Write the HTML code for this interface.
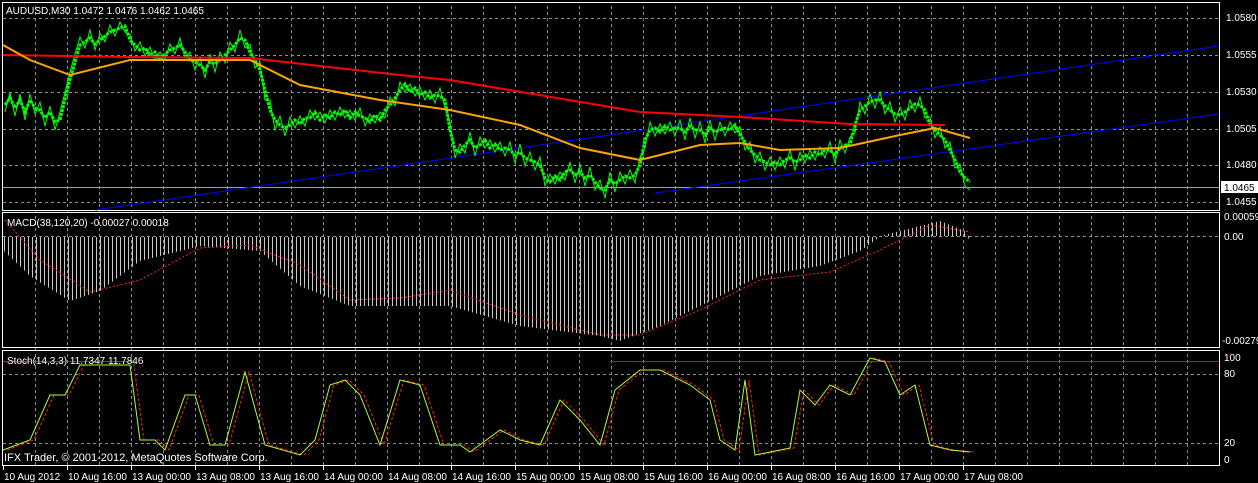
<!DOCTYPE html><html><head><meta charset="utf-8"><style>
body{margin:0;background:#000;width:1258px;height:483px;overflow:hidden}
svg{display:block}
text{font-family:"Liberation Sans",sans-serif;font-size:10px;fill:#fff}
</style></head><body>
<svg width="1258" height="483" xmlns="http://www.w3.org/2000/svg">
<defs>
<pattern id="vg" x="35" y="0" width="32" height="6" patternUnits="userSpaceOnUse"><rect x="0" y="0" width="1" height="3" fill="#8a9099"/></pattern>
<pattern id="hist" x="0" y="0" width="4" height="10" patternUnits="userSpaceOnUse"><rect x="0" y="0" width="1" height="10" fill="#c8c8c8"/></pattern>
</defs>
<rect x="35" y="3" width="1156" height="463" fill="url(#vg)"/>
<g stroke="#8a9099" stroke-dasharray="3,3">
<line x1="3" y1="18.5" x2="1219" y2="18.5"/><line x1="3" y1="55.5" x2="1219" y2="55.5"/><line x1="3" y1="92.5" x2="1219" y2="92.5"/><line x1="3" y1="129.5" x2="1219" y2="129.5"/><line x1="3" y1="165.5" x2="1219" y2="165.5"/><line x1="3" y1="202.5" x2="1219" y2="202.5"/><line x1="3" y1="236.5" x2="1219" y2="236.5"/><line x1="3" y1="374.5" x2="1219" y2="374.5"/><line x1="3" y1="443.5" x2="1219" y2="443.5"/>
</g>
<g fill="none" stroke="#fff">
<rect x="2.5" y="2.5" width="1217" height="208"/><rect x="2.5" y="212.5" width="1217" height="135"/><rect x="2.5" y="350.5" width="1217" height="115"/>
</g>
<line x1="3" y1="187.5" x2="1219" y2="187.5" stroke="#9aa0a8"/>
<line x1="95" y1="210" x2="1219" y2="46" stroke="#0000ff"/>
<line x1="655" y1="193" x2="1219" y2="114" stroke="#0000ff"/>
<polyline fill="none" stroke="#00ff00" stroke-width="1" points="5,112 10,92 15,116 20,94 25,120 30,94 35,114 40,102 45,126 50,106 55,130 60,112 65,92 70,72 75,54 80,37 85,48 90,30 95,50 100,33 105,42 110,25 115,36 120,22 125,32 130,34 135,51 140,42 145,56 150,47 155,60 160,52 165,60 170,44 175,54 180,38 185,58 190,52 195,70 200,57 205,78 210,54 215,72 220,52 225,63 230,42 235,52 240,30 245,48 250,44 255,68 260,62 265,100 270,100 275,130 280,116 285,136 290,117 295,128 300,116 305,126 310,110 315,120 320,112 325,123 330,110 335,120 340,107 345,118 350,110 355,120 360,108 365,126 370,114 375,123 380,112 385,118 390,97 395,106 400,82 405,92 410,84 415,96 420,87 425,100 430,90 435,103 440,88 445,108 450,122 455,158 460,144 465,153 470,132 475,156 480,137 485,148 490,140 495,152 500,142 505,156 510,142 515,163 520,144 525,166 530,152 535,170 540,157 545,186 550,174 555,184 560,172 565,180 570,162 575,183 580,164 585,186 590,167 595,190 600,180 605,198 610,172 615,192 620,172 625,184 630,170 635,183 640,157 645,148 650,122 655,136 660,124 665,134 670,122 675,136 680,120 685,140 690,118 695,138 700,122 705,143 710,120 715,140 720,122 725,136 730,122 735,133 740,127 745,150 750,142 755,163 760,152 765,170 770,157 775,170 780,157 785,168 790,150 795,170 800,152 805,163 810,150 815,160 820,147 825,158 830,142 835,163 840,140 845,153 850,137 855,133 860,102 865,114 870,94 875,108 880,92 885,114 890,102 895,122 900,107 905,120 910,100 915,112 920,97 925,118 930,117 935,138 940,127 945,148 950,142 955,168 960,164 965,186 970,190"/>
<polyline fill="none" stroke="#00ff00" stroke-width="3" stroke-dasharray="3,1" points="5,105 10,98 15,108 20,100 25,112 30,100 35,108 40,110 45,118 50,112 55,122 60,120 65,100 70,80 75,62 80,45 85,42 90,38 95,44 100,40 105,36 110,32 115,30 120,28 125,26 130,40 135,45 140,50 145,48 150,55 155,52 160,60 165,54 170,50 175,48 180,45 185,52 190,60 195,62 200,65 205,70 210,62 215,64 220,60 225,55 230,50 235,45 240,38 245,40 250,52 255,60 260,70 265,90 270,110 275,120 280,125 285,128 290,125 295,120 300,124 305,118 310,118 315,112 320,120 325,115 330,118 335,112 340,115 345,110 350,118 355,112 360,116 365,118 370,122 375,115 380,120 385,110 390,105 395,98 400,90 405,84 410,92 415,88 420,95 425,92 430,98 435,95 440,96 445,100 450,130 455,150 460,152 465,145 470,140 475,148 480,145 485,140 490,148 495,144 500,150 505,148 510,150 515,155 520,152 525,158 530,160 535,162 540,165 545,178 550,182 555,176 560,180 565,172 570,170 575,175 580,172 585,178 590,175 595,182 600,188 605,190 610,180 615,184 620,180 625,176 630,178 635,175 640,165 645,140 650,130 655,128 660,132 665,126 670,130 675,128 680,128 685,132 690,126 695,130 700,130 705,135 710,128 715,132 720,130 725,128 730,130 735,125 740,135 745,142 750,150 755,155 760,160 765,162 770,165 775,162 780,165 785,160 790,158 795,162 800,160 805,155 810,158 815,152 820,155 825,150 830,150 835,155 840,148 845,145 850,145 855,125 860,110 865,106 870,102 875,100 880,100 885,106 890,110 895,114 900,115 905,112 910,108 915,104 920,105 925,110 930,125 935,130 940,135 945,140 950,150 955,160 960,172 965,178 970,182"/>
<polyline fill="none" stroke="#ff0000" stroke-width="2" points="3,55 130,57 250,58 400,75 450,80 640,112 740,117 850,124 945,125"/>
<polyline fill="none" stroke="#ffa500" stroke-width="2" points="3,45 30,60 70,75 130,60 250,60 300,85 380,100 450,110 520,125 580,148 640,160 700,145 740,143 780,150 840,148 900,135 935,128 970,138"/>
<polygon fill="url(#hist)" points="4,237 4,251 30,276 70,301 100,291 140,261 200,246 260,251 300,286 350,306 450,306 520,326 600,336 620,341 660,326 700,306 760,276 820,266 860,251 880,237"/>
<polygon fill="url(#hist)" points="880,236 900,231 940,221 965,231 972,246 972,236"/>
<polyline fill="none" stroke="#ff2020" stroke-dasharray="2,2" points="5,220 40,260 90,292 140,280 200,248 250,245 300,265 350,300 400,298 450,290 520,315 600,335 640,335 700,310 760,280 830,272 880,250 930,225 970,232"/>
<line x1="3" y1="361.5" x2="135" y2="361.5" stroke="#ff0000"/><line x1="610" y1="361.5" x2="1219" y2="361.5" stroke="#ff0000"/>
<polyline fill="none" stroke="#ff2020" stroke-dasharray="3,2" points="7,450 34,440 54,395 69,395 84,365 134,365 144,440 159,440 169,450 189,395 199,395 214,445 229,445 249,372 269,445 304,455 319,440 334,385 349,380 364,395 384,445 404,380 424,385 444,445 464,445 474,452 504,430 524,440 544,445 564,400 584,420 604,445 619,390 644,370 664,370 694,385 714,400 724,440 739,450 749,380 759,455 794,448 804,390 819,405 834,385 854,395 874,358 889,362 904,395 919,385 934,445 954,450 974,452"/>
<polyline fill="none" stroke="#adff2f" points="3,450 30,440 50,395 65,395 80,365 120,365 130,365 140,440 155,440 165,450 185,395 195,395 210,445 225,445 245,372 265,445 300,455 315,440 330,385 345,380 360,395 380,445 400,380 420,385 440,445 460,445 470,452 500,430 520,440 540,445 560,400 580,420 600,445 615,390 640,370 660,370 690,385 710,400 720,440 735,450 745,380 755,455 790,448 800,390 815,405 830,385 850,395 870,358 885,362 900,395 915,385 930,445 950,450 970,452"/>
<text x="6" y="14">AUDUSD,M30  1.0472 1.0476 1.0462 1.0465</text>
<text x="7" y="226">MACD(38,120,20) -0.00027 0.00018</text>
<text x="7" y="364">Stoch(14,3,3) 11.7347 11.7846</text>
<text x="4" y="461" style="font-size:11px">IFX Trader, © 2001-2012, MetaQuotes Software Corp.</text>
<text x="1226" y="21">1.0580</text><text x="1226" y="58">1.0555</text><text x="1226" y="95">1.0530</text><text x="1226" y="132">1.0505</text><text x="1226" y="168">1.0480</text><text x="1226" y="205">1.0455</text>
<text x="1224" y="220">0.00059</text><text x="1224" y="240">0.00</text><text x="1222" y="344">-0.00279</text>
<text x="1224" y="361">100</text><text x="1224" y="377">80</text><text x="1224" y="446">20</text><text x="1224" y="463">0</text>
<rect x="1221" y="181" width="37" height="12" fill="#fff"/><text x="1224" y="191" style="fill:#000">1.0465</text>
<g stroke="#fff"><line x1="3.5" y1="466" x2="3.5" y2="470"/><line x1="67.5" y1="466" x2="67.5" y2="470"/><line x1="131.5" y1="466" x2="131.5" y2="470"/><line x1="195.5" y1="466" x2="195.5" y2="470"/><line x1="259.5" y1="466" x2="259.5" y2="470"/><line x1="323.5" y1="466" x2="323.5" y2="470"/><line x1="387.5" y1="466" x2="387.5" y2="470"/><line x1="451.5" y1="466" x2="451.5" y2="470"/><line x1="515.5" y1="466" x2="515.5" y2="470"/><line x1="579.5" y1="466" x2="579.5" y2="470"/><line x1="643.5" y1="466" x2="643.5" y2="470"/><line x1="707.5" y1="466" x2="707.5" y2="470"/><line x1="771.5" y1="466" x2="771.5" y2="470"/><line x1="835.5" y1="466" x2="835.5" y2="470"/><line x1="899.5" y1="466" x2="899.5" y2="470"/><line x1="963.5" y1="466" x2="963.5" y2="470"/></g>
<text x="4" y="480">10 Aug 2012</text><text x="68" y="480">10 Aug 16:00</text><text x="132" y="480">13 Aug 00:00</text><text x="196" y="480">13 Aug 08:00</text><text x="260" y="480">13 Aug 16:00</text><text x="324" y="480">14 Aug 00:00</text><text x="388" y="480">14 Aug 08:00</text><text x="452" y="480">14 Aug 16:00</text><text x="516" y="480">15 Aug 00:00</text><text x="580" y="480">15 Aug 08:00</text><text x="644" y="480">15 Aug 16:00</text><text x="708" y="480">16 Aug 00:00</text><text x="772" y="480">16 Aug 08:00</text><text x="836" y="480">16 Aug 16:00</text><text x="900" y="480">17 Aug 00:00</text><text x="964" y="480">17 Aug 08:00</text>
</svg>
</body></html>
